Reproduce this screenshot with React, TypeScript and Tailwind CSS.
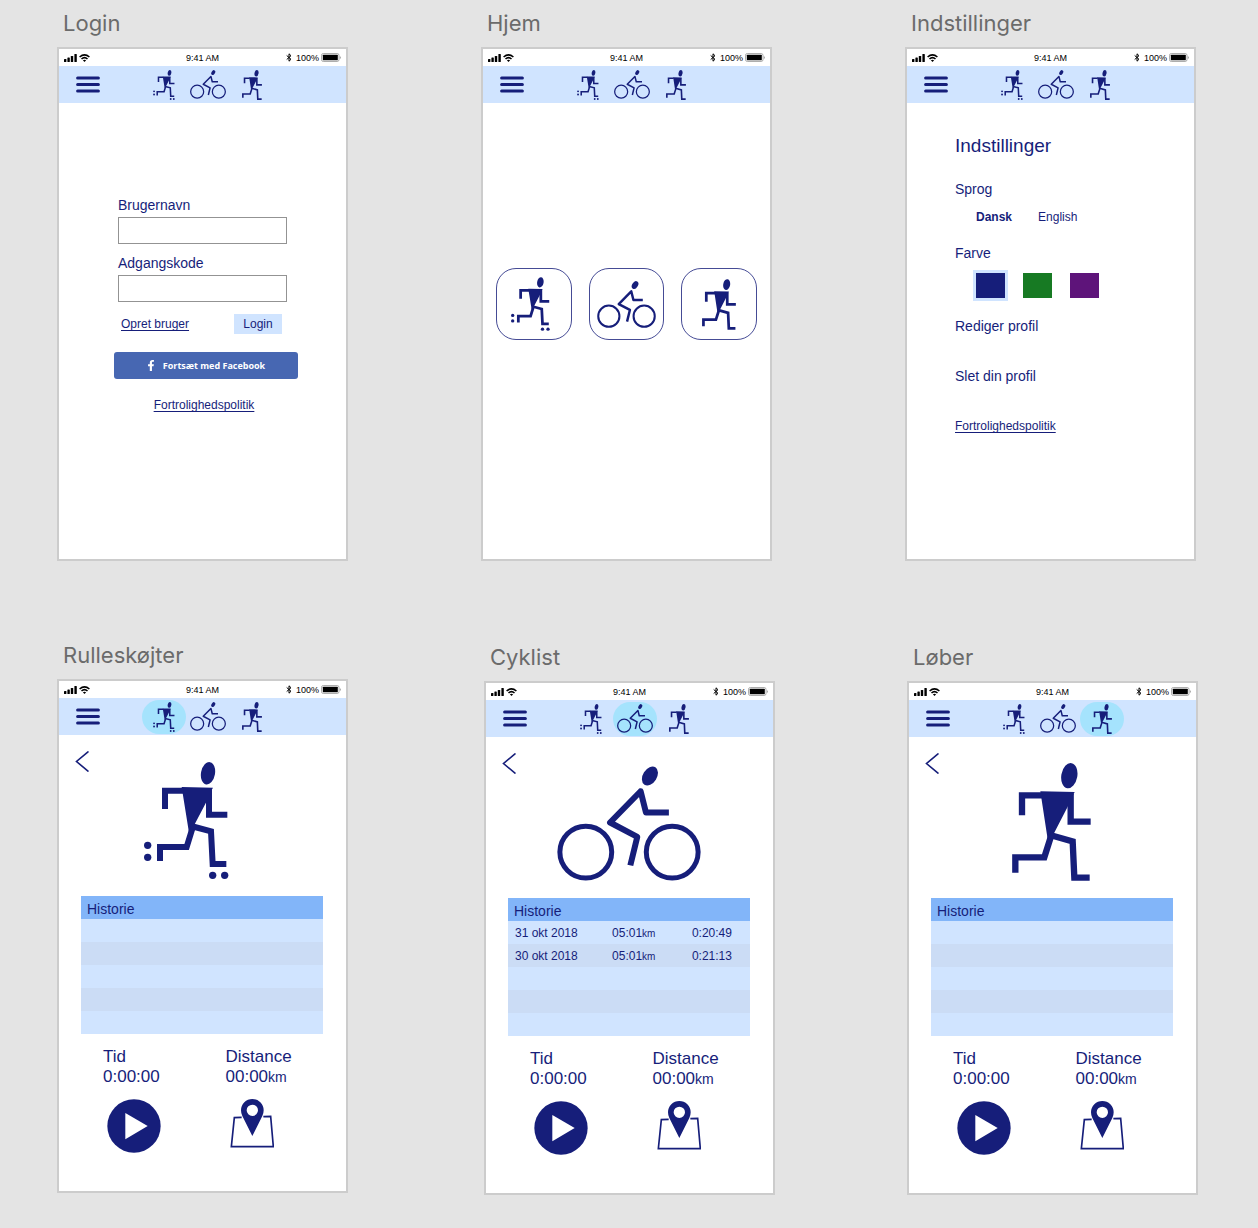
import { useId } from "react";
import type { ReactNode } from "react";
import { FaFacebookF } from "react-icons/fa";

type Sport = "skater" | "cyclist" | "runner";
type IconProps = { className?: string };

function SkaterIcon({ className }: IconProps) {
  return (
    <svg viewBox="283 366 255 351" className={className} fill="currentColor" aria-hidden="true">
      <ellipse cx="475" cy="400" rx="21" ry="34" transform="rotate(10 475 400)" />
      <path d="M396 441 490 443 486 450 470 486 435 553 418 578Z" />
      <g fill="none" stroke="currentColor" strokeWidth="18">
        <path d="M346 507V452H402" />
        <path d="M478 448V524H533" />
        <path d="M428 566 411 621H331V663" />
        <path d="M424 558 484 574 489 672H530" />
      </g>
      <circle cx="294" cy="616" r="11" />
      <circle cx="294" cy="652" r="11" />
      <circle cx="489" cy="706" r="11" />
      <circle cx="525" cy="706" r="11" />
    </svg>
  );
}

function CyclistIcon({ className }: IconProps) {
  return (
    <svg viewBox="246 379 432 346" className={className} fill="none" stroke="currentColor" aria-hidden="true">
      <ellipse cx="525" cy="409" rx="21" ry="31" transform="rotate(32 525 409)" fill="currentColor" stroke="none" />
      <circle cx="332" cy="638" r="78" strokeWidth="15" />
      <circle cx="592" cy="638" r="78" strokeWidth="15" />
      <path d="M582 519H513L497 455 405 549 487 592 466 678" strokeWidth="18" strokeLinejoin="round" />
    </svg>
  );
}

function RunnerIcon({ className }: IconProps) {
  return (
    <svg viewBox="336 371 237 354" className={className} fill="currentColor" aria-hidden="true">
      <ellipse cx="508" cy="409" rx="24" ry="38" transform="rotate(10 508 409)" />
      <path d="M421 456 524 458 520 466 503 502 462 582 443 600Z" />
      <g fill="none" stroke="currentColor" strokeWidth="19">
        <path d="M366 528V468H428" />
        <path d="M512 464V547H572" />
        <path d="M454 588 433 654H346V700" />
        <path d="M450 587 518 606 523 715H569" />
      </g>
    </svg>
  );
}

function StatusBar() {
  return (
    <div className="grid h-[17px] grid-cols-3 items-center px-[5px] text-[9px] leading-4 text-black">
      <div className="flex items-center gap-[2px]">
        <svg viewBox="0 0 13 8" className="h-2 w-[13px]" aria-hidden="true">
          <rect x="0" y="5" width="2.4" height="3" rx=".6" />
          <rect x="3.4" y="3.5" width="2.4" height="4.5" rx=".6" />
          <rect x="6.8" y="2" width="2.4" height="6" rx=".6" />
          <rect x="10.4" y="0" width="2.4" height="8" rx=".6" />
        </svg>
        <svg viewBox="0 0 11 8" className="h-2 w-[11px]" fill="none" stroke="black" strokeWidth="1.6" aria-hidden="true">
          <path d="M.6 3Q5.5-1.2 10.4 3" />
          <path d="M2.5 5Q5.5 2.4 8.5 5" />
          <path d="M5.5 8 3.9 6.3Q5.5 5.1 7.1 6.3Z" fill="black" stroke="none" />
        </svg>
      </div>
      <span className="text-center">9:41 AM</span>
      <div className="flex items-center justify-end">
        <svg viewBox="0 0 6 9" className="mr-1 h-[9px] w-[6px]" fill="none" stroke="black" strokeWidth="1" aria-hidden="true">
          <path d="M.7 2.5 5 6.3 3 8.2V.8L5 2.7.7 6.5" />
        </svg>
        <span>100%</span>
        <svg viewBox="0 0 20 9" className="ml-[2px] h-[9px] w-5" aria-hidden="true">
          <rect x=".5" y=".5" width="17.5" height="8" rx="1.8" fill="none" stroke="#999" strokeWidth=".8" />
          <rect x="1.8" y="1.7" width="15" height="5.6" rx=".5" />
          <path d="M18.8 3v3q1-.5 1-1.5t-1-1.5Z" fill="#999" />
        </svg>
      </div>
    </div>
  );
}

function NavBar({ active }: { active?: Sport }) {
  const item = "flex h-[34px] w-11 items-center justify-center rounded-full";
  const on = " bg-[#a5e3fd]";
  return (
    <header className="flex h-[37px] items-center bg-[#d0e4ff] pl-[17px]">
      <button type="button" aria-label="Menu">
        <svg viewBox="0 0 24 17" className="h-[17px] w-6" stroke="currentColor" strokeWidth="3" strokeLinecap="round" aria-hidden="true">
          <path d="M1.6 2H22.4M1.6 8.5H22.4M1.6 15H22.4" />
        </svg>
      </button>
      <nav className="ml-[42px] flex">
        <a href="#rulleskojter" aria-label="Rulleskøjter" className={item + (active === "skater" ? on : "")}>
          <SkaterIcon className="h-[30px] w-[22px]" />
        </a>
        <a href="#cyklist" aria-label="Cyklist" className={item + (active === "cyclist" ? on : "")}>
          <CyclistIcon className="h-[29px] w-[36px]" />
        </a>
        <a href="#lober" aria-label="Løber" className={item + (active === "runner" ? on : "")}>
          <RunnerIcon className="h-[30px] w-5" />
        </a>
      </nav>
    </header>
  );
}

function Artboard({ title, active, className = "", children }: { title: string; active?: Sport; className?: string; children: ReactNode }) {
  return (
    <section className={"min-w-0 flex-1 " + className}>
      <h2 className="mb-2 pl-[6px] font-['Inter',sans-serif] text-[22px] leading-8 text-[#6b6b6b]">{title}</h2>
      <div className="min-h-[514px] border-2 border-[#cccccc] bg-white">
        <StatusBar />
        <NavBar active={active} />
        {children}
      </div>
    </section>
  );
}

function Field({ label, type }: { label: string; type: string }) {
  const id = useId();
  return (
    <div>
      <label htmlFor={id} className="block text-sm">{label}</label>
      <input id={id} type={type} className="mt-[2px] block h-[27px] w-full border border-[#939393] bg-white px-2 text-sm" />
    </div>
  );
}

function LoginScreen() {
  return (
    <form className="flex flex-col pt-[92px] pr-12 pl-[55px]" onSubmit={(e) => e.preventDefault()}>
      <div className="flex flex-col gap-[9px] pr-[11px] pl-1">
        <Field label="Brugernavn" type="text" />
        <Field label="Adgangskode" type="password" />
      </div>
      <div className="mt-3 flex items-center justify-between pr-4 pl-[7px] text-xs leading-5">
        <a href="#opret" className="underline underline-offset-2">Opret bruger</a>
        <button type="submit" className="w-12 bg-[#d0e4ff]">Login</button>
      </div>
      <button type="button" className="mt-[18px] flex h-[27px] items-center justify-center gap-2 rounded-[3px] bg-[#4767b2] font-['Open_Sans',sans-serif] text-[9px] font-bold text-white">
        <FaFacebookF className="h-[11px] w-[8px]" aria-hidden="true" />
        Fortsæt med Facebook
      </button>
      <a href="#privatliv" className="mt-4 self-center pr-1 text-xs leading-5 underline underline-offset-2">Fortrolighedspolitik</a>
    </form>
  );
}

function HomeScreen() {
  const tile = "flex h-[72px] flex-1 items-center justify-center rounded-[20px] border border-[#161e7a]/80";
  return (
    <div className="flex gap-[17px] px-[13px] pt-[165px]">
      <button type="button" aria-label="Rulleskøjter" className={tile}>
        <SkaterIcon className="mr-[6px] h-[54px] w-[39px]" />
      </button>
      <button type="button" aria-label="Cyklist" className={tile}>
        <CyclistIcon className="h-[47px] w-[59px]" />
      </button>
      <button type="button" aria-label="Løber" className={tile}>
        <RunnerIcon className="h-[51px] w-[34px]" />
      </button>
    </div>
  );
}

function SettingsScreen() {
  const swatch = "h-[25px] w-[29px] appearance-none checked:outline-3 checked:outline-[#d0e4ff]";
  return (
    <div className="pt-[31px] pl-12">
      <h1 className="text-[19px] leading-6">Indstillinger</h1>
      <h3 className="mt-[21px] text-sm">Sprog</h3>
      <div className="mt-2 flex gap-[26px] pl-[21px] text-xs leading-5">
        <button type="button" className="font-bold">Dansk</button>
        <button type="button">English</button>
      </div>
      <h3 className="mt-4 text-sm">Farve</h3>
      <div className="mt-[10px] flex gap-[18px] pl-[21px]">
        <input type="radio" name="farve" aria-label="Blå" defaultChecked className={swatch + " bg-[#161e7a]"} />
        <input type="radio" name="farve" aria-label="Grøn" className={swatch + " bg-[#177a23]"} />
        <input type="radio" name="farve" aria-label="Lilla" className={swatch + " bg-[#5e147a]"} />
      </div>
      <div className="mt-[18px] flex flex-col items-start gap-[30px]">
        <button type="button" className="text-sm">Rediger profil</button>
        <button type="button" className="text-sm">Slet din profil</button>
        <a href="#privatliv" className="text-xs leading-5 underline underline-offset-2">Fortrolighedspolitik</a>
      </div>
    </div>
  );
}

type Trip = { date: string; distance: string; time: string };

const cyclingTrips: Trip[] = [
  { date: "31 okt 2018", distance: "05:01", time: "0:20:49" },
  { date: "30 okt 2018", distance: "05:01", time: "0:21:13" },
];

function TrackerScreen({ icon, trips = [] }: { icon: ReactNode; trips?: Trip[] }) {
  return (
    <div>
      <div className="grid h-36 grid-cols-[1fr_auto_1fr] items-end pr-[18px] pl-4">
        <button type="button" aria-label="Tilbage" className="mt-4 self-start justify-self-start">
          <svg viewBox="0 0 14 21" className="h-[21px] w-[14px]" fill="none" stroke="currentColor" strokeWidth="1.6" strokeLinecap="round" aria-hidden="true">
            <path d="M13 .9 1.5 10.5 13 20.1" />
          </svg>
        </button>
        {icon}
      </div>
      <div className="pt-[17px] pr-[23px] pl-[22px]">
        <table className="w-full table-fixed border-collapse text-left text-xs leading-5">
          <colgroup>
            <col className="w-[43%]" />
            <col className="w-[33%]" />
            <col />
          </colgroup>
          <thead>
            <tr className="h-[23px] bg-[#82b5f9]">
              <th colSpan={3} className="p-0 pt-[2px] pl-[6px] text-sm font-normal">Historie</th>
            </tr>
          </thead>
          <tbody>
            {[0, 1, 2, 3, 4].map((i) => (
              <tr key={i} className="h-[23px] odd:bg-[#d0e4ff] even:bg-[#cbdcf5]">
                <td className="p-0 pl-[7px]">{trips[i]?.date}</td>
                <td className="p-0">
                  {trips[i] && (<>{trips[i].distance}<span className="text-[10px] leading-none">km</span></>)}
                </td>
                <td className="p-0">{trips[i]?.time}</td>
              </tr>
            ))}
          </tbody>
        </table>
      </div>
      <div className="grid grid-cols-2 gap-x-0.5 pt-[13px] pl-11 text-[17px] leading-5">
        <div>
          <p>Tid</p>
          <p>0:00:00</p>
          <button type="button" aria-label="Start" className="mt-3 ml-1 block">
            <svg viewBox="173 656 162 162" className="size-[54px]" aria-hidden="true">
              <circle cx="254" cy="737" r="80" fill="currentColor" />
              <path d="M228 698V777L295 737Z" fill="white" />
            </svg>
          </button>
        </div>
        <div>
          <p>Distance</p>
          <p>00:00<span className="text-sm leading-none">km</span></p>
          <button type="button" aria-label="Kort" className="mt-3 ml-1 block">
            <svg viewBox="540 660 132 147" className="h-[49px] w-11" aria-hidden="true">
              <path d="M575 715 553 716 544 803H670L662 712 640 713" fill="none" stroke="currentColor" strokeWidth="5" />
              <path fillRule="evenodd" fill="currentColor" d="M607 771 577 711Q573 703 573 694A34 34 0 0 1 641 694Q641 703 637 711ZM607 677A17 17 0 1 0 607 711 17 17 0 1 0 607 677Z" />
            </svg>
          </button>
        </div>
      </div>
    </div>
  );
}

export default function App() {
  return (
    <main className="min-h-screen bg-[#e4e4e4] pt-[7px] pb-8 font-['Liberation_Sans',Arial,sans-serif] text-[#161e7a]">
      <div className="flex gap-[133px] pr-[62px] pl-[57px]">
        <Artboard title="Login"><LoginScreen /></Artboard>
        <Artboard title="Hjem"><HomeScreen /></Artboard>
        <Artboard title="Indstillinger"><SettingsScreen /></Artboard>
      </div>
      <div className="mt-[78px] flex pr-[60px] pl-[57px]">
        <Artboard title="Rulleskøjter" active="skater">
          <TrackerScreen icon={<SkaterIcon className="mr-[30px] h-[117px] w-[85px]" />} />
        </Artboard>
        <Artboard title="Cyklist" active="cyclist" className="mt-0.5 ml-[136px]">
          <TrackerScreen icon={<CyclistIcon className="h-[115px] w-36" />} trips={cyclingTrips} />
        </Artboard>
        <Artboard title="Løber" active="runner" className="mt-0.5 ml-[132px]">
          <TrackerScreen icon={<RunnerIcon className="h-[118px] w-[79px]" />} />
        </Artboard>
      </div>
    </main>
  );
}
